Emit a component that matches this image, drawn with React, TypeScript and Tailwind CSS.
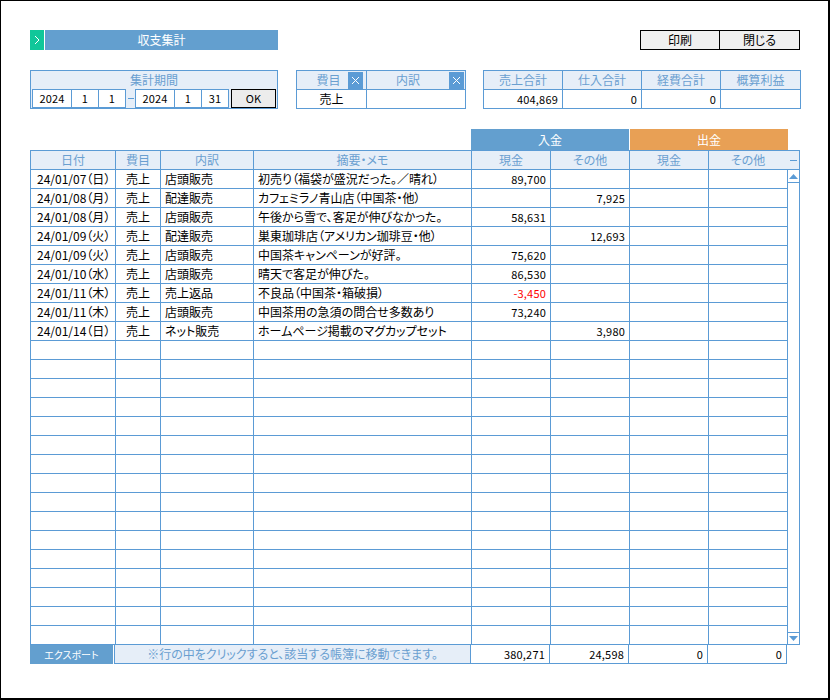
import React from "react";

const B = "border-[#5b9bd5]";

type Row = {
  date: string;
  item: string;
  sub: string;
  memo: string;
  cash?: string;
  other?: string;
  neg?: boolean;
};

const rows: Row[] = [
  { date: "24/01/07（日）", item: "売上", sub: "店頭販売", memo: "初売り（福袋が盛況だった。／晴れ）", cash: "89,700" },
  { date: "24/01/08（月）", item: "売上", sub: "配達販売", memo: "カフェミラノ青山店（中国茶・他）", other: "7,925" },
  { date: "24/01/08（月）", item: "売上", sub: "店頭販売", memo: "午後から雪で、客足が伸びなかった。", cash: "58,631" },
  { date: "24/01/09（火）", item: "売上", sub: "配達販売", memo: "巣東珈琲店（アメリカン珈琲豆・他）", other: "12,693" },
  { date: "24/01/09（火）", item: "売上", sub: "店頭販売", memo: "中国茶キャンペーンが好評。", cash: "75,620" },
  { date: "24/01/10（水）", item: "売上", sub: "店頭販売", memo: "晴天で客足が伸びた。", cash: "86,530" },
  { date: "24/01/11（木）", item: "売上", sub: "売上返品", memo: "不良品（中国茶・箱破損）", cash: "-3,450", neg: true },
  { date: "24/01/11（木）", item: "売上", sub: "店頭販売", memo: "中国茶用の急須の問合せ多数あり", cash: "73,240" },
  { date: "24/01/14（日）", item: "売上", sub: "ネット販売", memo: "ホームページ掲載のマグカップセット", other: "3,980" },
];

const cols = "grid-cols-[85px_45px_93px_218px_79px_79px_79px_79px]";
const num = "text-[11px] tracking-[0.2px]";

const ClearBtn = () => (
  <div className="w-[15px] h-[17px] bg-[#5b9bd5] flex items-center justify-center">
    <svg width="9" height="9" viewBox="0 0 9 9">
      <path d="M1 1L8 8M8 1L1 8" stroke="white" strokeWidth="1" />
    </svg>
  </div>
);

export default function App() {
  const filled = [...rows, ...Array.from({ length: 25 - rows.length }, () => null)];

  return (
    <div className="w-[830px] h-[700px] bg-white border-l border-t border-r-2 border-b-2 border-black text-[12px] text-black leading-none font-['Noto_Sans_CJK_JP','Liberation_Sans',sans-serif] [font-feature-settings:'palt']">
      {/* top bar */}
      <div className="flex items-start pt-[29px] pl-[29px] pr-[28px]">
        <div className="w-[14px] h-[20px] bg-[#10c79a] flex items-center justify-center">
          <svg width="8" height="12" viewBox="0 0 8 12">
            <path d="M2 2L6 6L2 10" stroke="white" strokeWidth="1" fill="none" />
          </svg>
        </div>
        <div className="ml-px w-[233px] h-[20px] bg-[#639fcf] text-white flex items-center justify-center">
          収支集計
        </div>
        <div className="ml-auto flex">
          <div className="w-[80px] h-[20px] bg-[#f0f0f0] border border-black flex items-center justify-center">印刷</div>
          <div className="w-[80px] h-[20px] bg-[#f0f0f0] border border-l-0 border-black flex items-center justify-center">閉じる</div>
        </div>
      </div>

      {/* filters */}
      <div className="flex items-start pl-[29px] pt-[20px]">
        <div className={`w-[248px] h-[39px] border ${B} bg-[#e6eef8]`}>
          <div className="h-[18px] flex items-center justify-center text-[#6a9fd0]">集計期間</div>
          <div className={`flex items-center px-px ${num}`}>
            {["2024", "1", "1"].map((v, i) => (
              <div key={i} className={`h-[19px] bg-white border ${B} ${i > 0 ? "border-l-0" : ""} flex items-center justify-center ${i === 0 ? "w-[40px]" : "w-[27px]"}`}>{v}</div>
            ))}
            <div className="w-[9px] h-[19px] flex items-center justify-center">
              <div className="w-[6px] h-px bg-[#5b9bd5]" />
            </div>
            {["2024", "1", "31"].map((v, i) => (
              <div key={i} className={`h-[19px] bg-white border ${B} ${i > 0 ? "border-l-0" : ""} flex items-center justify-center ${i === 0 ? "w-[40px]" : "w-[27px]"}`}>{v}</div>
            ))}
            <div className="ml-[2px] w-[45px] h-[19px] bg-[#ececec] border border-black flex items-center justify-center">OK</div>
          </div>
        </div>

        <div className={`ml-[18px] w-[170px] h-[39px] border ${B}`}>
          <div className={`h-[19px] flex bg-[#e6eef8] border-b ${B}`}>
            <div className={`w-[70px] flex items-center border-r ${B}`}>
              <span className="flex-1 text-center text-[#6a9fd0] pl-[12px]">費目</span>
              <div className="mr-[3px]"><ClearBtn /></div>
            </div>
            <div className="flex-1 flex items-center">
              <span className="flex-1 text-center text-[#6a9fd0]">内訳</span>
              <div className="mr-px"><ClearBtn /></div>
            </div>
          </div>
          <div className="h-[18px] flex">
            <div className={`w-[70px] border-r ${B} flex items-center justify-center`}>売上</div>
            <div className="flex-1" />
          </div>
        </div>

        <div className={`ml-[17px] w-[318px] h-[39px] border ${B}`}>
          <div className={`h-[19px] grid grid-cols-[79px_79px_79px_1fr] bg-[#e6eef8] border-b ${B}`}>
            {["売上合計", "仕入合計", "経費合計", "概算利益"].map((t, i) => (
              <div key={t} className={`flex items-center justify-center text-[#6a9fd0] ${i < 3 ? `border-r ${B}` : ""}`}>{t}</div>
            ))}
          </div>
          <div className={`h-[18px] grid grid-cols-[79px_79px_79px_1fr] ${num}`}>
            {["404,869", "0", "0", ""].map((t, i) => (
              <div key={i} className={`flex items-center justify-end pr-[4px] ${i < 3 ? `border-r ${B}` : ""}`}>{t}</div>
            ))}
          </div>
        </div>
      </div>

      {/* main table */}
      <div className="pl-[29px] pt-[20px]">
        <div className="flex ml-[441px] h-[21px]">
          <div className="w-[158px] bg-[#639fcf] text-white flex items-center justify-center">入金</div>
          <div className="w-[158px] ml-px bg-[#e8a055] text-white flex items-center justify-center">出金</div>
        </div>
        <div className="flex">
          <div className={`w-[757px] border-l border-t ${B}`}>
            <div className={`grid ${cols} h-[19px] bg-[#e6eef8] text-[#6a9fd0]`}>
              {["日付", "費目", "内訳", "摘要・メモ", "現金", "その他", "現金", "その他"].map((t, i) => (
                <div key={i} className={`border-r border-b ${B} flex items-center justify-center`}>{t}</div>
              ))}
            </div>
            {filled.map((r, idx) => (
              <div key={idx} className={`grid ${cols} h-[19px]`}>
                <div className={`border-r border-b ${B} flex items-center pl-[6px] whitespace-nowrap`}>{r?.date}</div>
                <div className={`border-r border-b ${B} flex items-center justify-center`}>{r?.item}</div>
                <div className={`border-r border-b ${B} flex items-center pl-[4px]`}>{r?.sub}</div>
                <div className={`border-r border-b ${B} flex items-center pl-[4px] whitespace-nowrap overflow-hidden`}>{r?.memo}</div>
                <div className={`border-r border-b ${B} flex items-center justify-end pr-[4px] ${num} ${r?.neg ? "text-[#ff0000]" : ""}`}>{r?.cash}</div>
                <div className={`border-r border-b ${B} flex items-center justify-end pr-[4px] ${num}`}>{r?.other}</div>
                <div className={`border-r border-b ${B}`} />
                <div className={`border-r border-b ${B}`} />
              </div>
            ))}
          </div>
          <div className={`w-[13px] border-t border-r ${B} flex flex-col`}>
            <div className={`h-[19px] bg-[#e6eef8] border-b ${B} flex items-center justify-center`}>
              <div className="w-[7px] h-px bg-[#5b9bd5]" />
            </div>
            <div className={`h-[13px] border-b ${B} flex items-center justify-center`}>
              <svg width="9" height="5" viewBox="0 0 9 5"><path d="M4.5 0L9 5H0Z" fill="#5b9bd5" /></svg>
            </div>
            <div className="flex-1" />
            <div className={`h-[13px] border-t border-b ${B} flex items-center justify-center`}>
              <svg width="9" height="5" viewBox="0 0 9 5"><path d="M0 0H9L4.5 5Z" fill="#5b9bd5" /></svg>
            </div>
          </div>
        </div>
        <div className={`grid ${cols} h-[19px] w-[757px]`}>
          <div className={`border-r ${B} pr-[1px]`}>
            <div className="h-full bg-[#639fcf] text-white text-[10px] flex items-center justify-center">エクスポート</div>
          </div>
          <div className={`col-span-3 bg-[#e6eef8] border-r border-b ${B} flex items-center justify-center text-[#6a9fd0]`}>
            ※行の中をクリックすると、該当する帳簿に移動できます。
          </div>
          {["380,271", "24,598", "0", "0"].map((t, i) => (
            <div key={i} className={`border-r border-b ${B} flex items-center justify-end pr-[4px] ${num}`}>{t}</div>
          ))}
        </div>
      </div>
    </div>
  );
}
